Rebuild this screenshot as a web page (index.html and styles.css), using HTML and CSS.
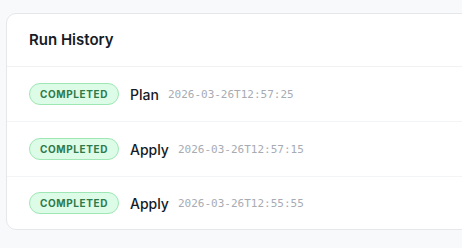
FILE: index.html
```html
<!DOCTYPE html>
<html>
<head>
<meta charset="utf-8">
<link rel="stylesheet" href="styles.css">
</head>
<body>
<div class="card">
  <div class="card-header">Run History</div>
  <div class="row">
    <span class="badge">COMPLETED</span>
    <span class="kind">Plan</span>
    <span class="ts">2026-03-26T12:57:25</span>
  </div>
  <div class="row">
    <span class="badge">COMPLETED</span>
    <span class="kind">Apply</span>
    <span class="ts">2026-03-26T12:57:15</span>
  </div>
  <div class="row">
    <span class="badge">COMPLETED</span>
    <span class="kind">Apply</span>
    <span class="ts">2026-03-26T12:55:55</span>
  </div>
</div>
</body>
</html>
```
FILE: styles.css
```css
html, body {
  margin: 0;
  padding: 0;
  background: #f8f9fb;
  overflow: hidden;
}
body {
  padding: 13px 0 0 6px;
  font-family: Inter, "Noto Sans", sans-serif;
}
.card {
  width: 500px;
  background: #ffffff;
  border: 1px solid #e5e7eb;
  border-radius: 10px;
  box-sizing: border-box;
}
.card-header {
  height: 53px;
  display: flex;
  align-items: center;
  padding: 0 22px 1px;
  font-size: 15px;
  font-weight: 600;
  color: #161b26;
  border-bottom: 1px solid #f1f2f4;
  box-sizing: border-box;
}
.row {
  height: 55px;
  display: flex;
  align-items: center;
  padding: 0 22px;
  border-bottom: 1px solid #f3f4f6;
  box-sizing: border-box;
}
.row:last-child {
  border-bottom: none;
  height: 52px;
}
.badge {
  display: inline-flex;
  align-items: center;
  height: 22px;
  padding: 0 10px;
  box-sizing: border-box;
  border: 1px solid #9ee6b3;
  background: #dcfce7;
  color: #2f7a4b;
  border-radius: 11px;
  font-size: 10px;
  font-weight: 700;
  letter-spacing: 0.06em;
}
.kind {
  margin-left: 11px;
  font-size: 14px;
  font-weight: 500;
  color: #161b26;
}
.ts {
  margin-left: 9px;
  font-family: "DejaVu Sans Mono", monospace;
  font-size: 11px;
  color: #a7abb3;
}
```
